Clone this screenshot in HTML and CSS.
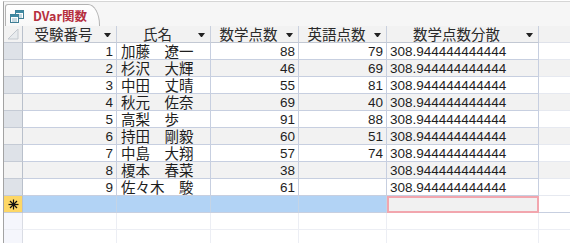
FILE: index.html
```html
<!DOCTYPE html>
<html lang="ja">
<head>
<meta charset="UTF-8">
<title>DVar関数</title>
<link rel="stylesheet" href="styles.css">
</head>
<body>
<div class="window">
  <div class="tabs">
    <div class="tab">
      <svg class="tab-icon" width="14" height="13" viewBox="0 0 14 13">
        <rect x="5.5" y="0.5" width="8" height="8" fill="#fff" stroke="#3f7e95"/>
        <rect x="5.5" y="0.5" width="8" height="2.5" fill="#3f8aa3"/>
        <line x1="7" y1="5" x2="12" y2="5" stroke="#8fb5c4"/>
        <line x1="7" y1="7" x2="12" y2="7" stroke="#8fb5c4"/>
        <rect x="0.5" y="4.5" width="8" height="8" fill="#fff" stroke="#3f7e95"/>
        <rect x="0.5" y="4.5" width="8" height="2.5" fill="#3f8aa3"/>
        <line x1="2" y1="9" x2="7" y2="9" stroke="#8fb5c4"/>
        <line x1="2" y1="11" x2="7" y2="11" stroke="#8fb5c4"/>
      </svg>
      <span class="tab-title">DVar関数</span>
    </div>
  </div>

  <div class="grid">
    <div class="row head">
      <div class="cell sel">
        <svg width="12" height="12" viewBox="0 0 12 12"><polygon points="11,1 11,11 1,11" fill="#e8ebee" stroke="#c3c8cf"/></svg>
      </div>
      <div class="cell c1"><span class="label">受験番号</span><span class="arrow"></span></div>
      <div class="cell c2"><span class="label">氏名</span><span class="arrow"></span></div>
      <div class="cell c3"><span class="label">数学点数</span><span class="arrow"></span></div>
      <div class="cell c4"><span class="label">英語点数</span><span class="arrow"></span></div>
      <div class="cell c5 current"><span class="label">数学点数分散</span><span class="arrow"></span></div>
      <div class="cell fill"></div>
    </div>

    <div class="row">
      <div class="cell sel"></div><div class="cell c1 num">1</div><div class="cell c2">加藤　遼一</div>
      <div class="cell c3 num">88</div><div class="cell c4 num">79</div><div class="cell c5 val">308.944444444444</div><div class="cell fill"></div>
    </div>
    <div class="row">
      <div class="cell sel"></div><div class="cell c1 num">2</div><div class="cell c2">杉沢　大輝</div>
      <div class="cell c3 num">46</div><div class="cell c4 num">69</div><div class="cell c5 val">308.944444444444</div><div class="cell fill"></div>
    </div>
    <div class="row">
      <div class="cell sel"></div><div class="cell c1 num">3</div><div class="cell c2">中田　丈晴</div>
      <div class="cell c3 num">55</div><div class="cell c4 num">81</div><div class="cell c5 val">308.944444444444</div><div class="cell fill"></div>
    </div>
    <div class="row">
      <div class="cell sel"></div><div class="cell c1 num">4</div><div class="cell c2">秋元　佐奈</div>
      <div class="cell c3 num">69</div><div class="cell c4 num">40</div><div class="cell c5 val">308.944444444444</div><div class="cell fill"></div>
    </div>
    <div class="row">
      <div class="cell sel"></div><div class="cell c1 num">5</div><div class="cell c2">高梨　歩</div>
      <div class="cell c3 num">91</div><div class="cell c4 num">88</div><div class="cell c5 val">308.944444444444</div><div class="cell fill"></div>
    </div>
    <div class="row">
      <div class="cell sel"></div><div class="cell c1 num">6</div><div class="cell c2">持田　剛毅</div>
      <div class="cell c3 num">60</div><div class="cell c4 num">51</div><div class="cell c5 val">308.944444444444</div><div class="cell fill"></div>
    </div>
    <div class="row">
      <div class="cell sel"></div><div class="cell c1 num">7</div><div class="cell c2">中島　大翔</div>
      <div class="cell c3 num">57</div><div class="cell c4 num">74</div><div class="cell c5 val">308.944444444444</div><div class="cell fill"></div>
    </div>
    <div class="row">
      <div class="cell sel"></div><div class="cell c1 num">8</div><div class="cell c2">榎本　春菜</div>
      <div class="cell c3 num">38</div><div class="cell c4 num"></div><div class="cell c5 val">308.944444444444</div><div class="cell fill"></div>
    </div>
    <div class="row">
      <div class="cell sel"></div><div class="cell c1 num">9</div><div class="cell c2">佐々木　駿</div>
      <div class="cell c3 num">61</div><div class="cell c4 num"></div><div class="cell c5 val">308.944444444444</div><div class="cell fill"></div>
    </div>

    <div class="row new">
      <div class="cell sel">
        <svg width="11" height="11" viewBox="0 0 11 11" stroke="#111" stroke-width="1.2">
          <line x1="5.5" y1="0.5" x2="5.5" y2="10.5"/>
          <line x1="0.5" y1="5.5" x2="10.5" y2="5.5"/>
          <line x1="2" y1="2" x2="9" y2="9"/>
          <line x1="9" y1="2" x2="2" y2="9"/>
        </svg>
      </div>
      <div class="cell c1"></div><div class="cell c2"></div><div class="cell c3"></div><div class="cell c4"></div>
      <div class="cell c5 focus"></div><div class="cell fill"></div>
    </div>

    <div class="row empty">
      <div class="cell sel"></div><div class="cell c1"></div><div class="cell c2"></div><div class="cell c3"></div><div class="cell c4"></div><div class="cell c5"></div><div class="cell fill"></div>
    </div>
    <div class="row empty">
      <div class="cell sel"></div><div class="cell c1"></div><div class="cell c2"></div><div class="cell c3"></div><div class="cell c4"></div><div class="cell c5"></div><div class="cell fill"></div>
    </div>
  </div>
</div>
</body>
</html>
```

FILE: styles.css
```css
body {
    margin: 0;
    background: #fff;
    font-family: "Noto Sans CJK JP", sans-serif;
    color: #1e1e1e;
    overflow: hidden;
}
.window {
    margin: 1px 0 0 3px;
    height: 242px;
    border-top: 1px solid #d6d6d6;
    border-left: 1px solid #a3a3a3;
    background: #fff;
}
.tabs {
    height: 24px;
    display: flex;
    align-items: flex-end;
    padding-left: 1px;
    background: #f6f6f6;
}
.tab {
    box-sizing: border-box;
    width: 95px;
    height: 22px;
    display: flex;
    align-items: center;
    gap: 9px;
    padding-left: 4px;
    border: 1px solid #b3b3b3;
    border-bottom: none;
    border-radius: 3px 12px 0 0 / 3px 21px 0 0;
    background: linear-gradient(#ffffff, #f8f8f8);
}
.tab-icon {
    flex: none;
    margin-top: 1px;
}
.tab-title {
    font-size: 12.5px;
    font-weight: bold;
    color: #b6303f;
    line-height: 14px;
}

/* datasheet */
.row {
    display: flex;
    height: 17px;
}
.cell {
    box-sizing: border-box;
    height: 17px;
    flex: none;
    border-right: 1px solid #c7cfe0;
    border-bottom: 1px solid #c7cfe0;
    padding: 0 3px 0 4px;
    line-height: 16px;
    font-size: 14.5px;
    white-space: nowrap;
}
.row:nth-child(odd):not(.new):not(.empty) .cell {
    background: #f2f2f2;
}
.sel { width: 19px; padding: 0; }
.c1 { width: 94px; }
.c2 { width: 94px; }
.c3 { width: 88px; }
.c4 { width: 88px; }
.c5 { width: 152px; }
.fill {
    flex: 1;
    border-right: none;
    border-bottom-color: #e6e9f0;
}
.row .cell.fill { background: #fff; }
.row .cell.sel {
    background: #dee2e8;
    border-right-color: #b9c0cb;
    border-bottom-color: #c5cbd5;
}
.num {
    text-align: right;
    font-family: "Liberation Sans", sans-serif;
    font-size: 13.5px;
    padding-top: 1px;
}
.val {
    font-family: "Liberation Sans", sans-serif;
    font-size: 13.5px;
    padding: 1px 0 0 3px;
}

/* header */
.head .cell {
    display: flex;
    align-items: center;
    background: linear-gradient(#e3e6ea, #d8dce2);
    border-bottom-color: #c2c8d3;
    border-right-color: #c9d0de;
    padding: 0;
    color: #2a2a2a;
}
.head .cell.sel {
    align-items: flex-end;
    justify-content: flex-end;
    padding: 0 3px 2px 0;
    background: linear-gradient(#e3e6ea, #d8dce2);
}
.head .label {
    flex: 1;
    text-align: center;
}
.arrow {
    flex: none;
    width: 1px;
    height: 0;
    margin: 1px 5px 0 0;
    border-top: 4px solid #222;
    border-left: 3px solid transparent;
    border-right: 3px solid transparent;
}
.head .cell.current {
    background: linear-gradient(#fde9a2, #f9d360);
}
.head .cell.fill {
    background: #f4f5fb;
    border-bottom-color: #dfe2ea;
}

/* new record row */
.new .cell {
    background: #b2d3f5;
    border-right-color: #c4d4e6;
    border-bottom-color: #c7cfe0;
}
.new .cell.sel {
    display: flex;
    align-items: center;
    justify-content: center;
    background: #fdd766;
}
.new .cell.focus {
    background: #f1f1f1;
    border: 2px solid #f2a6ae;
}

/* rows past the end of the data */
.empty .cell {
    border-right-color: #eceef4;
    border-bottom-color: #eceef4;
}
.empty .cell.sel {
    background: #f5f6fc;
    border-right-color: #d9dce4;
    border-bottom-color: #eceef4;
}
```
